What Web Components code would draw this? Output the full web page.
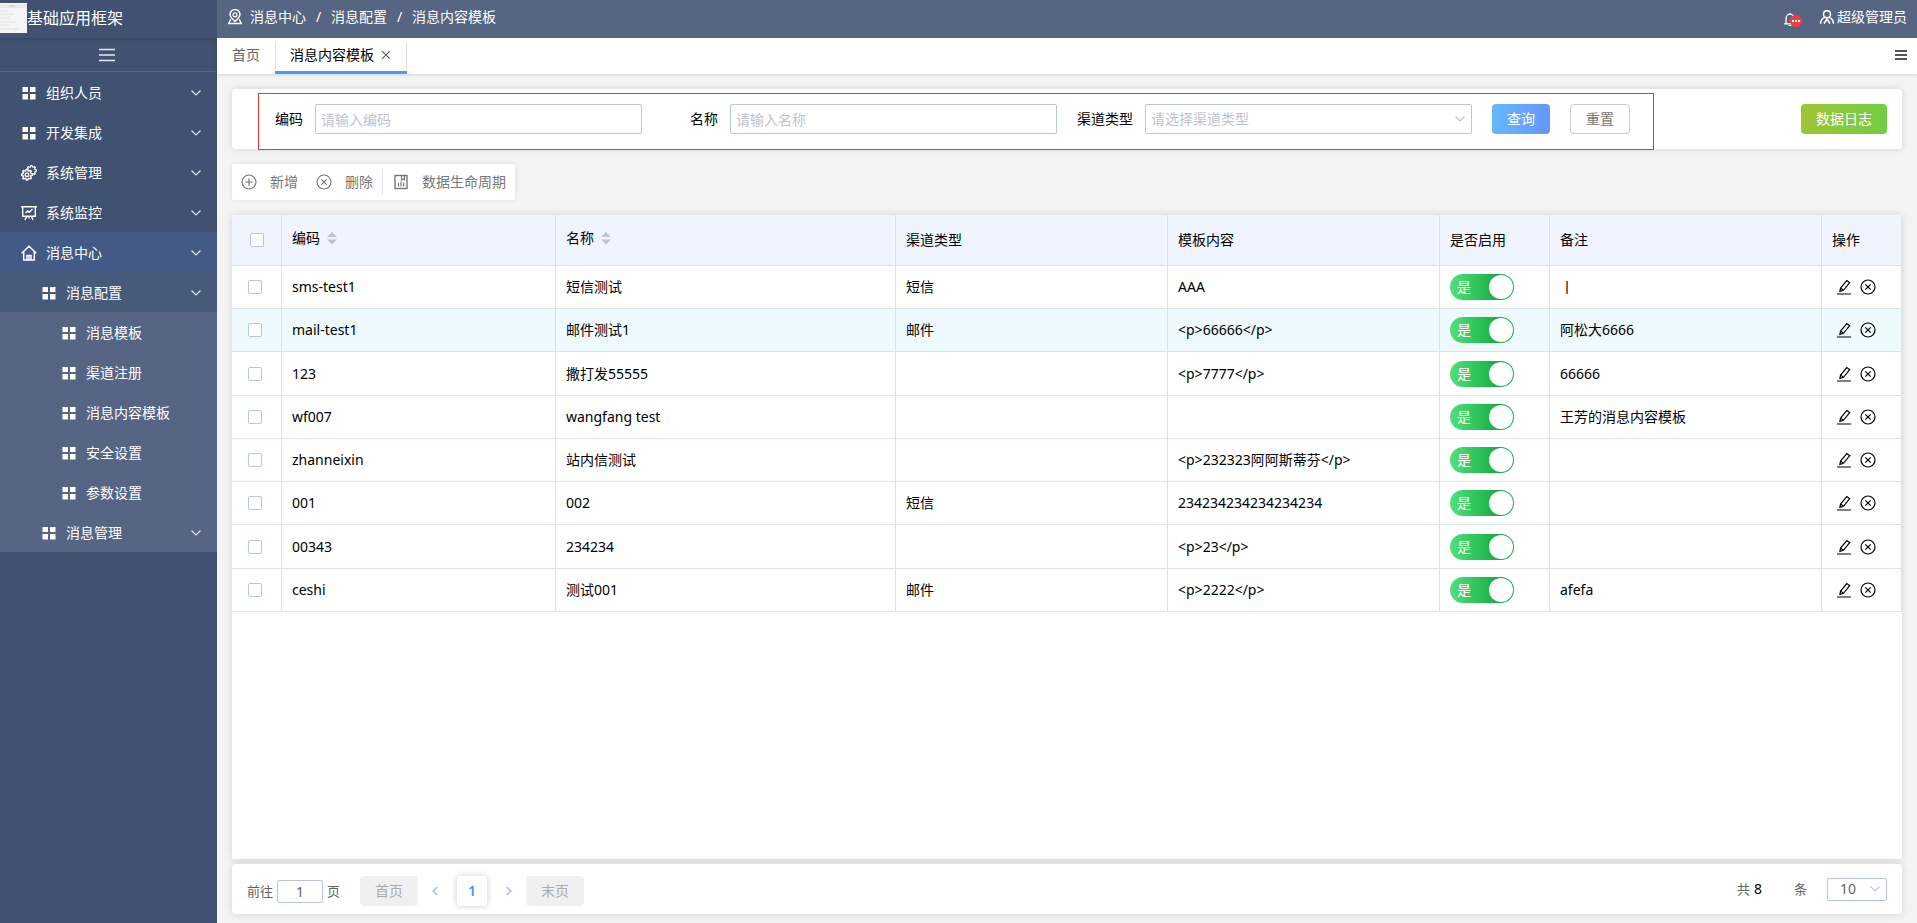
<!DOCTYPE html>
<html lang="zh-CN">
<head>
<meta charset="utf-8">
<meta name="viewport" content="width=device-width, initial-scale=1">
<title>消息内容模板</title>
<style>
  html, body { margin: 0; height: 100%; }
  body {
    font: 14px/20px "Noto Sans", "Noto Sans CJK SC", sans-serif;
    color: #000;
    background: #f4f4f4;
    --line: #dae2ee;
    --field: #b3c5ee;
    --shadow: 0 0 8px rgba(0, 0, 0, .13);
  }
</style>
</head>
<body>
<app-shell>
  <app-sidebar slot="side" heading="基础应用框架">
    <menu-item icon="grid" arrow>组织人员</menu-item>
    <menu-item icon="grid" arrow>开发集成</menu-item>
    <menu-item icon="gears" arrow>系统管理</menu-item>
    <menu-item icon="monitor" arrow>系统监控</menu-item>
    <menu-item icon="home" arrow tone="active">消息中心</menu-item>
    <menu-item icon="grid" arrow level="2" tone="open">消息配置</menu-item>
    <menu-item icon="grid" level="3" tone="sub">消息模板</menu-item>
    <menu-item icon="grid" level="3" tone="sub">渠道注册</menu-item>
    <menu-item icon="grid" level="3" tone="sub">消息内容模板</menu-item>
    <menu-item icon="grid" level="3" tone="sub">安全设置</menu-item>
    <menu-item icon="grid" level="3" tone="sub">参数设置</menu-item>
    <menu-item icon="grid" arrow level="2" tone="sub">消息管理</menu-item>
  </app-sidebar>
  <app-header user="超级管理员">
    <a href="#center">消息中心</a>
    <a href="#config">消息配置</a>
    <a href="#template">消息内容模板</a>
  </app-header>
  <tab-bar></tab-bar>
  <page-body>
    <search-panel></search-panel>
    <action-bar></action-bar>
    <template-grid></template-grid>
    <page-pager></page-pager>
  </page-body>
</app-shell>

<script>
/* Outline of a cog with n rounded teeth between the radii inner and outer. */
function cog(cx, cy, inner, outer, n) {
  const points = [];
  for (let i = 0; i < n * 4; i++) {
    const r = i % 4 < 2 ? outer : inner;
    const a = (i - 0.5) * Math.PI / (2 * n);
    points.push((cx + r * Math.cos(a)).toFixed(2) + ' ' + (cy + r * Math.sin(a)).toFixed(2));
  }
  return 'M' + points.join('L') + 'Z';
}

const ICONS = {
  grid: '<path fill="currentColor" stroke="none" d="M1.500 2h5.500v5H1.500zM9 2h5.500v5H9zM1.500 9h5.500v5.500H1.500zM9 9h5.500v5.500H9z"/>',
  gears: `<g stroke-linejoin="round"><path d="${cog(10.5, 5.500, 3.700, 5, 8)}"/><path fill="#405172" stroke-width="1.400" d="${cog(6, 9.700, 4.100, 5.500, 8)}"/></g><circle cx="6" cy="9.700" r="1.800" stroke-width="1.400"/>`,
  monitor: '<path stroke-width="1.400" d="M0 1.700h16M1.700 1.700v9.600h12.600V1.700M5.500 11.500L4 15M10.500 11.500L12 15M8 11v2.500"/><path stroke-width="1.500" d="M4.500 8l2.200-2 1.500 1.300L11.500 4"/>',
  home: '<path stroke-width="1.500" d="M.7 8.300L8 1.300l7.300 7M2.700 7v8h10.600V7M6 15v-4.500h4V15M8 10.500V15"/>',
  down: '<path d="M3.500 5.500L8 10l4.500-4.500"/>',
  left: '<path stroke-width="1.800" d="M10.500 3.500L6 8l4.500 4.500"/>',
  right: '<path stroke-width="1.800" d="M5.500 3.500L10 8l-4.500 4.500"/>',
  bars: '<path stroke-width="1.600" d="M0 2.500h16M0 8h16M0 13.500h16"/>',
  barsBold: '<path stroke-width="2" d="M2 4h12M2 8h12M2 12h12"/>',
  place: '<circle cx="8" cy="5.800" r="2"/><path stroke-width="1.400" d="M8 12.500C5 9.800 3 8 3 5.500a5 5 0 0 1 10 0C13 8 11 9.800 8 12.500zM3.800 10.200L1.700 14.500h12.600l-2.100-4.300"/>',
  bell: '<path stroke-width="1.500" d="M1 13.500h14M3.500 13.500V7a4.500 4.500 0 0 1 9 0v6.500M8 2.500V1M6.500 15.500h3"/>',
  user: '<path stroke-width="1.500" d="M8 1.700c2.300 0 3.500 1.500 3.500 3.500S10.100 8.700 8 8.700 4.500 7.200 4.500 5.200 5.700 1.700 8 1.700zM5.500 8.300C3 9.600 1.700 11.600 1.500 14.800M10.500 8.300c2.500 1.300 3.800 3.300 4 6.500M5 14.500L8 10l3 4.500"/>',
  close: '<path d="M3.500 3.500l9 9M12.500 3.500l-9 9"/>',
  plusCircle: '<circle cx="8" cy="8" r="7"/><path d="M8 4.200v7.600M4.200 8h7.600"/>',
  closeCircle: '<circle cx="8" cy="8" r="7"/><path d="M5.300 5.300l5.400 5.400M10.700 5.300l-5.400 5.400"/>',
  chart: '<rect x="2" y="1.500" width="12" height="13" stroke-width="1.400"/><path d="M5.500 12.500V9M8 12.500V7.500M10.700 12.500V8.500M8.500 1.500v4.500l1.500-1 1.500 1V1.500"/>',
  edit: '<path d="M1 15h14M4.500 9.200L10.800 1.500l2.900 2.200L7.400 11.300 3.900 12.400zM4.700 9.100l2.700 2.200"/>',
  sort: '<path fill="currentColor" stroke="none" d="M3 7l5-5 5 5zM3 9.500h10l-5 5z"/>'
};

/* Base class: clones a template into an open shadow root. */
class Base extends HTMLElement {
  connectedCallback() {
    if (this.shadowRoot) return;
    const t = document.createElement('template');
    t.innerHTML = '<style>:host,*{box-sizing:border-box}button,input,select{font:inherit;color:inherit;margin:0}a{color:inherit;text-decoration:none}button{cursor:pointer}</style>' + this.view();
    this.attachShadow({ mode: 'open' }).append(t.content.cloneNode(true));
  }
}

customElements.define('ui-icon', class extends Base {
  view() {
    return `<style>:host{display:block;width:16px;height:16px;flex:none}svg{display:block;width:100%;height:100%}</style>
    <svg viewBox="0 0 16 16" fill="none" stroke="currentColor" stroke-width="1.200" aria-hidden="true">${ICONS[this.getAttribute('name')]}</svg>`;
  }
});

customElements.define('app-shell', class extends Base {
  view() {
    return `<style>
      :host{display:flex;min-height:100vh}
      .side{flex:none;width:217px;background:#405172;display:flex}
      main{flex:1;min-width:0;display:flex;flex-direction:column}
    </style>
    <div class="side"><slot name="side"></slot></div>
    <main><slot></slot></main>`;
  }
});

customElements.define('app-sidebar', class extends Base {
  view() {
    return `<style>
      :host{display:block;flex:1;color:#fff}
      header{height:38px;padding-bottom:2px;display:flex;align-items:center;font-size:16px;line-height:24px;box-shadow:0 1px 3px rgba(0,0,0,.2)}
      .logo{width:27px;height:30px;background:#f4f5f4;flex:none}
      .logo svg{display:block}
      .fold{display:flex;width:100%;height:34px;padding:0;align-items:center;justify-content:center;background:none;border:0;border-bottom:1px solid #566684;color:#e8ecf2}
      .fold ui-icon{margin-right:3px}
    </style>
    <header><span class="logo"><svg width="27" height="30" viewBox="0 0 27 30" fill="none" stroke="#dde1df">
      <path stroke="#e8ece9" stroke-width="4" d="M0 3h27"/><path stroke="#c3ccc7" d="M9 3h6"/>
      <path d="M0 8h8M0 11h14M0 15h10M0 19h16M0 22h9M0 26h18"/></svg></span><span>${this.getAttribute('heading')}</span></header>
    <button class="fold" aria-label="收起菜单"><ui-icon name="bars"></ui-icon></button>
    <nav><slot></slot></nav>`;
  }
});

customElements.define('menu-item', class extends Base {
  view() {
    return `<style>
      :host{display:block;background:#405172}
      :host([tone=active]){background:#445a86}
      :host([tone=open]){background:#485a7a}
      :host([tone=sub]){background:#566583}
      a{display:flex;align-items:center;height:40px;padding:2px 13px 0 21px;gap:9px}
      :host([level="2"]) a{padding-left:41px}
      :host([level="3"]) a{padding-left:61px}
      span{flex:1}
      .arrow{color:#dfe4ec}
    </style>
    <a href="#menu"><ui-icon name="${this.getAttribute('icon')}"></ui-icon><span><slot></slot></span>
    ${this.hasAttribute('arrow') ? '<ui-icon class="arrow" name="down"></ui-icon>' : ''}</a>`;
  }
});

customElements.define('app-header', class extends Base {
  view() {
    return `<style>
      :host{display:flex;height:38px;padding:0 10px 4px;align-items:center;background:#566582;color:#fff}
      nav{flex:1;display:flex;align-items:center}
      nav ui-icon{margin-right:7px}
      ::slotted(a){color:#fff;text-decoration:none}
      ::slotted(a:not(:last-of-type))::after{content:"/";display:inline-block;width:25px;text-align:center}
      .bell{position:relative;display:flex;height:34px;align-items:center;padding:4px 0 0;border:0;background:none;margin-right:22px}
      .bell ui-icon{width:14px;height:14px}
      .dot{position:absolute;left:7px;top:15px;width:12px;height:12px;border-radius:6px;background:#fb3c3c;display:flex;align-items:center;justify-content:center;gap:1px}
      .dot i{width:2px;height:2px;background:#fff}
      .user{display:flex;align-items:center;gap:2px}
    </style>
    <nav><ui-icon name="place"></ui-icon><slot></slot></nav>
    <button class="bell" aria-label="通知"><ui-icon name="bell"></ui-icon><span class="dot"><i></i><i></i><i></i></span></button>
    <a class="user" href="#user"><ui-icon name="user"></ui-icon><span>${this.getAttribute('user')}</span></a>`;
  }
});

customElements.define('tab-bar', class extends Base {
  view() {
    return `<style>
      :host{display:flex;height:36px;align-items:flex-start;background:#fff;box-shadow:0 1px 3px rgba(0,0,0,.12);padding-right:8px}
      a{height:36px;padding:7px 15px 0;color:#666}
      .on{display:flex;padding:4px 0 0;border-bottom:3px solid #409eff;color:#000}
      .on span{display:flex;gap:5px;height:27px;align-items:flex-start;padding:3px 13px 0 14px;border:solid #dcdfe6;border-width:0 1px}
      .on ui-icon{color:#555;width:14px;height:20px}
      button{margin:9px 0 0 auto;padding:0;border:0;background:none;color:#555}
    </style>
    <a href="#home">首页</a>
    <a class="on" href="#template"><span>消息内容模板<ui-icon name="close"></ui-icon></span></a>
    <button aria-label="标签菜单"><ui-icon name="barsBold"></ui-icon></button>`;
  }
});

customElements.define('page-body', class extends Base {
  view() {
    return `<style>:host{flex:1;display:flex;flex-direction:column;padding:15px 15px 9px}</style><slot></slot>`;
  }
});

customElements.define('search-panel', class extends Base {
  view() {
    return `<style>
      :host{display:flex;align-items:flex-start;gap:147px;height:60px;padding:4px 15px 0 26px;background:#fff;border-radius:4px;box-shadow:var(--shadow)}
      form{flex:1;display:grid;grid-template-columns:28px 1fr 64px 1fr 64px 1fr auto auto;column-gap:12px;height:57px;padding:10px 23px 0 16px;border:1px solid #f03535}
      label{line-height:30px;text-align:right;white-space:nowrap}
      input,select{width:100%;min-width:0;height:30px;padding:0 5px;border:1px solid var(--field);border-radius:2px;background:#fff;appearance:none;outline:0}
      select,::placeholder{color:#bfc3cc;opacity:1}
      .pick{display:grid;align-items:center}
      .pick>*{grid-area:1/1}
      .pick{height:30px}
      .pick ui-icon{justify-self:end;margin-right:4px;color:var(--field);pointer-events:none}
      button{height:30px;padding:0 15px;border-radius:4px;border:0;white-space:nowrap}
      .go{margin-left:8px;color:#fff;background:linear-gradient(90deg,#65b8fb,#6795fb)}
      .reset{margin-left:8px;color:#777;background:#fff;border:1px solid #ccc}
      .log{margin-top:11px;color:#fff;background:linear-gradient(90deg,#a0c334,#70ce45)}
    </style>
    <form onsubmit="return false">
      <label for="code">编码</label><input id="code" placeholder="请输入编码">
      <label for="name">名称</label><input id="name" placeholder="请输入名称">
      <label for="channel">渠道类型</label><div class="pick"><select id="channel"><option>请选择渠道类型</option></select><ui-icon name="down"></ui-icon></div>
      <button class="go">查询</button><button class="reset" type="reset">重置</button>
    </form>
    <button class="log">数据日志</button>`;
  }
});

customElements.define('action-bar', class extends Base {
  view() {
    return `<style>
      :host{display:flex;align-self:flex-start;align-items:center;height:36px;margin:15px 0;background:#fff;border-radius:2px;box-shadow:0 0 4px rgba(0,0,0,.1)}
      button{display:flex;align-items:center;gap:13px;height:26px;padding:0 9px;border:0;background:none;color:#777}
      .last{border-left:1px solid var(--line);padding-left:10px}
    </style>
    <button><ui-icon name="plusCircle"></ui-icon>新增</button>
    <button><ui-icon name="closeCircle"></ui-icon>删除</button>
    <button class="last"><ui-icon name="chart"></ui-icon>数据生命周期</button>`;
  }
});

customElements.define('ui-switch', class extends Base {
  view() {
    return `<style>
      :host{display:block}
      label{display:flex;align-items:center;justify-content:space-between;width:64px;height:26px;padding:0 1px 0 7px;border-radius:13px;color:#fff;background:linear-gradient(90deg,#50e07c,#16ad43 75%);cursor:pointer}
      input{appearance:none;width:24px;height:24px;border-radius:12px;background:#fff}
    </style>
    <label><slot></slot><input type="checkbox" role="switch" checked></label>`;
  }
});

const ROWS = [
  ['sms-test1', '短信测试', '短信', 'AAA', '丨'],
  ['mail-test1', '邮件测试1', '邮件', '<p>66666</p>', '阿松大6666'],
  ['123', '撒打发55555', '', '<p>7777</p>', '66666'],
  ['wf007', 'wangfang test', '', '', '王芳的消息内容模板'],
  ['zhanneixin', '站内信测试', '', '<p>232323阿阿斯蒂芬</p>', ''],
  ['001', '002', '短信', '234234234234234234', ''],
  ['00343', '234234', '', '<p>23</p>', ''],
  ['ceshi', '测试001', '邮件', '<p>2222</p>', 'afefa']
];
const esc = s => s.replace(/</g, '&lt;').replace(/>/g, '&gt;');

customElements.define('template-grid', class extends Base {
  view() {
    const rows = ROWS.map(([code, name, channel, body, note], i) => `<tr${i === 1 ? ' class="hover"' : ''}>
      <td class="check"><input type="checkbox" aria-label="选择 ${code}"></td>
      <td>${code}</td><td>${name}</td><td>${channel}</td><td>${esc(body)}</td>
      <td><ui-switch>是</ui-switch></td><td>${note}</td>
      <td><div class="ops"><button aria-label="编辑"><ui-icon name="edit"></ui-icon></button><button aria-label="删除"><ui-icon name="closeCircle"></ui-icon></button></div></td></tr>`).join('');
    return `<style>
      :host{display:block;flex:1;background:#fff;border-radius:2px;box-shadow:var(--shadow)}
      table{width:100%;table-layout:fixed;border-collapse:separate;border-spacing:0}
      th,td{padding:0 10px;border:solid var(--line);border-width:0 1px 1px 0;text-align:left;font-weight:400;white-space:nowrap;vertical-align:middle}
      th{height:51px;background:#f0f4ff}
      td{height:43px}
      tr:nth-child(4n+3) td{height:44px}
      .hover{background:#eefafe}
      .check{padding:0 0 0 16px}
      th.check{padding-left:18px}
      .check input{display:block;appearance:none;width:14px;height:14px;border:1px solid var(--field);border-radius:2px;background:#fff}
      .sort{display:flex;align-items:center;gap:4px;height:24px;margin-bottom:4px;padding:0;border:0;background:none}
      .sort ui-icon{color:#c0c4cc}
      .ops{display:flex;gap:8px;padding-left:4px}
      .ops button{padding:0;border:0;background:none}
    </style>
    <table>
      <colgroup><col style="width:50px"><col style="width:274px"><col style="width:340px"><col><col><col style="width:110px"><col><col style="width:80px"></colgroup>
      <thead><tr><th class="check"><input type="checkbox" aria-label="全选"></th>
        <th><button class="sort">编码<ui-icon name="sort"></ui-icon></button></th>
        <th><button class="sort">名称<ui-icon name="sort"></ui-icon></button></th>
        <th>渠道类型</th><th>模板内容</th><th>是否启用</th><th>备注</th><th>操作</th></tr></thead>
      <tbody>${rows}</tbody>
    </table>`;
  }
});

customElements.define('page-pager', class extends Base {
  view() {
    return `<style>
      :host{display:flex;align-items:center;height:50px;margin-top:5px;padding:4px 15px 0;background:#fff;border-radius:4px;box-shadow:var(--shadow);color:#606266}
      .jump{display:flex;align-items:center;gap:4px;font-size:13px;margin-right:20px}
      .jump input{width:46px;height:23px;padding:0;text-align:center;font-size:14px;border:1px solid var(--field);border-radius:2px;outline:0}
      button{height:30px;border:0;border-radius:4px;background:none;padding:0}
      .end{width:58px;background:#f0f0f0;color:#aaa}
      .arrow{width:39px;color:#a9bbdc;display:flex;align-items:center;justify-content:center}
      .arrow ui-icon{width:14px;height:14px}
      .now{width:30px;background:#fff;color:#4096fb;font-weight:600;box-shadow:0 0 6px rgba(0,0,0,.2)}
      .prev{padding-right:5px}.next{padding-left:4px}
      .total{margin-left:auto;display:flex;align-items:center;gap:4px;font-size:13px}
      b{font-weight:400;color:#000;font-size:14px;margin-right:28px}
      .pick{display:grid;align-items:center;width:60px;margin-left:20px}
      .pick>*{grid-area:1/1}
      select{appearance:none;height:23px;padding:0 12px;border:1px solid var(--field);border-radius:2px;background:#fff;font-size:14px;outline:0}
      .pick ui-icon{justify-self:end;margin-right:4px;color:var(--field);pointer-events:none}
      .total,.pick{margin-bottom:4px}
    </style>
    <label class="jump">前往<input value="1">页</label>
    <button class="end">首页</button>
    <button class="arrow prev" aria-label="上一页"><ui-icon name="left"></ui-icon></button>
    <button class="now">1</button>
    <button class="arrow next" aria-label="下一页"><ui-icon name="right"></ui-icon></button>
    <button class="end">末页</button>
    <span class="total">共<b>8</b>条</span>
    <span class="pick"><select aria-label="每页条数"><option>10</option></select><ui-icon name="down"></ui-icon></span>`;
  }
});
</script>
</body>
</html>
